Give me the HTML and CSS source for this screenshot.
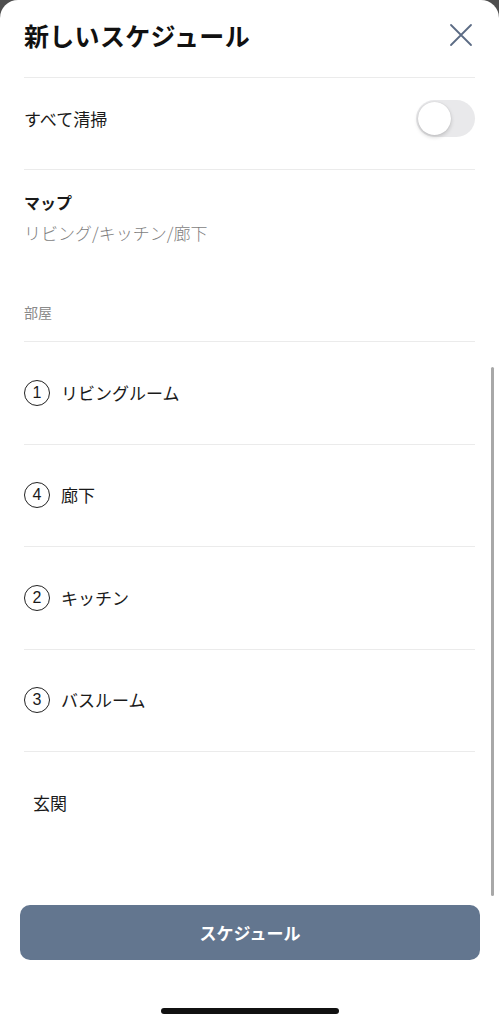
FILE: index.html
```html
<!DOCTYPE html>
<html lang="ja">
<head>
<meta charset="utf-8">
<title>新しいスケジュール</title>
<link rel="stylesheet" href="styles.css">
</head>
<body>
<div class="sheet">
  <header class="header">
    <h1 class="title">新しいスケジュール</h1>
    <button class="close" aria-label="閉じる">
      <svg width="28" height="28" viewBox="0 0 28 28"><path d="M4 4L24 24M24 4L4 24" stroke="#5b6b84" stroke-width="1.8" fill="none" stroke-linecap="round"/></svg>
    </button>
  </header>
  <div class="scroll">
    <div class="row toggle-row">
      <span class="label">すべて清掃</span>
      <span class="toggle"><span class="knob"></span></span>
    </div>
    <div class="map">
      <div class="map-title">マップ</div>
      <div class="map-sub">リビング/キッチン/廊下</div>
      <div class="section-label">部屋</div>
    </div>
    <ul class="rooms">
      <li class="room"><span class="num">1</span><span class="room-name">リビングルーム</span></li>
      <li class="room"><span class="num">4</span><span class="room-name">廊下</span></li>
      <li class="room"><span class="num">2</span><span class="room-name">キッチン</span></li>
      <li class="room"><span class="num">3</span><span class="room-name">バスルーム</span></li>
      <li class="room plain"><span class="room-name">玄関</span></li>
    </ul>
    <div class="scrollbar"></div>
  </div>
  <footer class="footer">
    <button class="primary">スケジュール</button>
    <div class="home-area"><span class="home"></span></div>
  </footer>
</div>
</body>
</html>
```
FILE: styles.css
```css
* { box-sizing: border-box; }
html, body { margin: 0; padding: 0; }
body {
  width: 499px;
  height: 1024px;
  background: #4e4e4e;
  font-family: "Noto Sans CJK JP", "Noto Sans", sans-serif;
  color: #1a1a1a;
  overflow: hidden;
}
.sheet {
  position: relative;
  height: 1024px;
  background: #fff;
  border-radius: 18px 18px 0 0;
  display: flex;
  flex-direction: column;
}
.header {
  display: flex;
  justify-content: space-between;
  align-items: flex-start;
  padding: 16px 24px 0 24px;
  height: 77px;
}
.title {
  margin: 0;
  font-size: 25px;
  line-height: 38px;
  font-weight: 700;
  letter-spacing: 0.3px;
  color: #111;
}
.close {
  border: 0;
  background: none;
  padding: 0;
  margin-top: 5px;
  width: 28px;
  height: 28px;
  display: block;
}
.close svg { display: block; }
.scroll {
  position: relative;
  flex: 1;
  overflow: hidden;
  padding: 0 24px;
}
.row {
  display: flex;
  align-items: center;
  justify-content: space-between;
}
.toggle-row {
  border-top: 1px solid #ebebeb;
  border-bottom: 1px solid #ebebeb;
  padding: 22px 0 32px;
}
.label { font-size: 17px; line-height: 37px; }
.toggle {
  width: 59px;
  height: 37px;
  border-radius: 19px;
  background: #e9e9eb;
  position: relative;
  display: block;
}
.knob {
  position: absolute;
  left: 2px;
  top: 2px;
  width: 33px;
  height: 33px;
  border-radius: 50%;
  background: #fff;
  box-shadow: 0 2px 4px rgba(0,0,0,0.18), 0 0 1px rgba(0,0,0,0.15);
}
.map {
  padding: 20px 0 19px;
  border-bottom: 1px solid #ebebeb;
}
.map-title {
  font-size: 16px;
  font-weight: 700;
  line-height: 24px;
}
.map-sub {
  margin-top: 7px;
  font-size: 17px;
  line-height: 24px;
  color: #7e7e7e;
  font-weight: 300;
}
.section-label {
  margin-top: 57px;
  font-size: 14px;
  line-height: 20px;
  color: #8a8a8a;
}
.rooms {
  list-style: none;
  margin: 0;
  padding: 0;
}
.room {
  display: flex;
  align-items: center;
  gap: 11px;
  height: 102.5px;
  border-bottom: 1px solid #ebebeb;
}
.room:last-child { border-bottom: 0; }
.room.plain { padding-left: 9px; }
.num {
  width: 26px;
  height: 26px;
  border: 1.3px solid #222;
  border-radius: 50%;
  display: flex;
  align-items: center;
  justify-content: center;
  font-size: 16px;
  line-height: 1;
  font-family: "Liberation Sans", "Noto Sans", sans-serif;
}
.room-name { font-size: 17px; line-height: 24px; }
.scrollbar {
  position: absolute;
  right: 5px;
  top: 290px;
  width: 3px;
  height: 529px;
  border-radius: 2px;
  background: #a8a8a8;
}
.footer {
  padding: 8px 19px 0 20px;
}
.primary {
  display: block;
  width: 100%;
  height: 55px;
  border: 0;
  border-radius: 10px;
  background: #63768f;
  color: #fff;
  font-family: "Noto Sans CJK JP", "Noto Sans", sans-serif;
  font-size: 17px;
  font-weight: 700;
}
.home-area {
  height: 64px;
  display: flex;
  justify-content: center;
  padding-top: 48px;
}
.home {
  display: block;
  width: 178px;
  height: 6px;
  border-radius: 3px;
  background: #111;
}
```
